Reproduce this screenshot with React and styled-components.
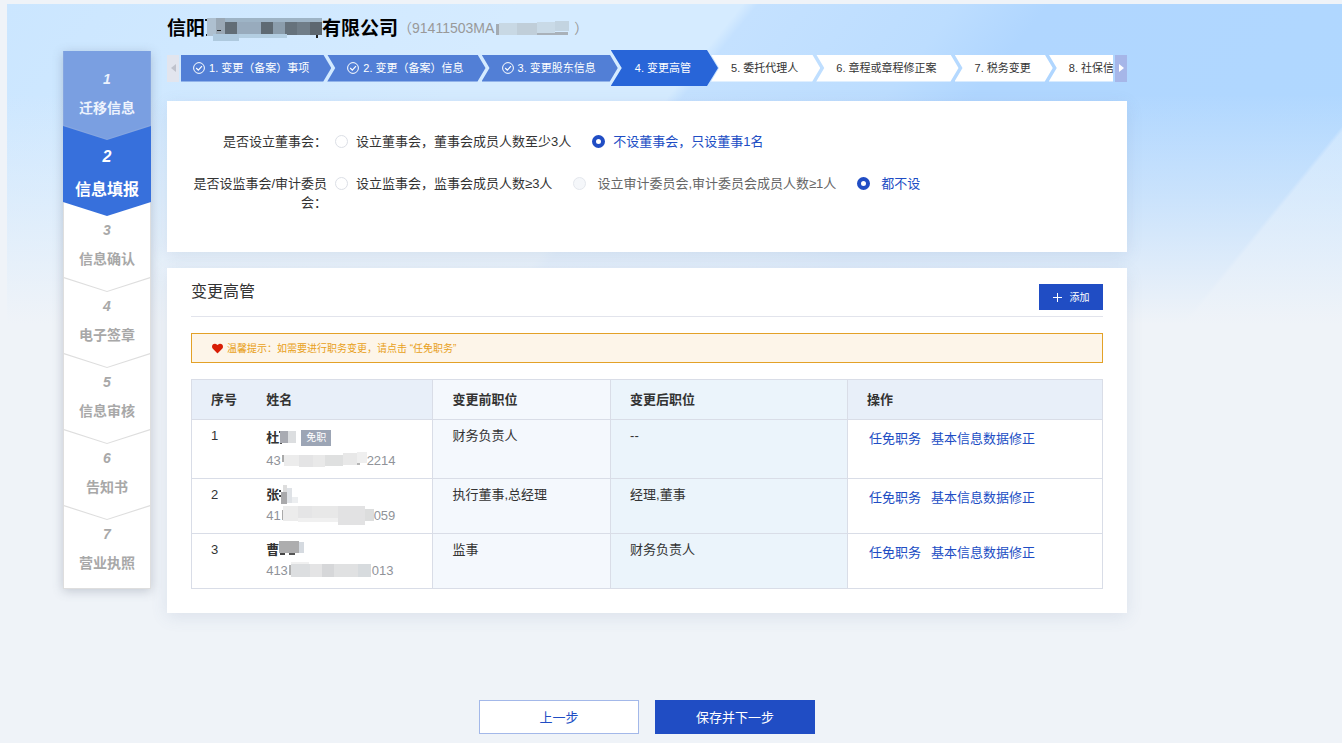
import styled, { createGlobalStyle, css } from 'styled-components';
import { FaHeart } from 'react-icons/fa';

const flowSteps = ['迁移信息', '信息填报', '信息确认', '电子签章', '信息审核', '告知书', '营业执照'];

const formSteps = [
  { name: '变更（备案）事项', state: 'done' },
  { name: '变更（备案）信息', state: 'done' },
  { name: '变更股东信息', state: 'done' },
  { name: '变更高管', state: 'active' },
  { name: '委托代理人', state: 'todo' },
  { name: '章程或章程修正案', state: 'todo' },
  { name: '税务变更', state: 'todo' },
  { name: '社保信息', state: 'todo' },
];

const questions = [
  {
    name: 'board',
    label: '是否设立董事会：',
    options: [
      { text: '设立董事会，董事会成员人数至少3人' },
      { text: '不设董事会，只设董事1名', checked: true },
    ],
  },
  {
    name: 'supervisor',
    label: '是否设监事会/审计委员会：',
    options: [
      { text: '设立监事会，监事会成员人数≥3人' },
      { text: '设立审计委员会,审计委员会成员人数≥1人', disabled: true, wide: true },
      { text: '都不设', checked: true, wide: true },
    ],
  },
];

// mask blocks: [x, y, width, height, colour]
const people = [
  {
    surname: '杜',
    removed: true,
    idStart: '43',
    idEnd: '2214',
    before: '财务负责人',
    after: '--',
    nameMask: { w: 17, blocks: [[0, 3, 3, 2, '#444'], [1, 6, 2, 10, '#555'], [1, 3, 8, 12, '#a9abb2'], [9, 3, 8, 12, '#dcdee0']] },
    idMask: { w: 86, blocks: [[1, 4, 3, 7, '#aaa'], [74, 10, 5, 4, '#b5b5b5'], [3, 4, 15, 11, '#ececec'], [18, 4, 14, 12, '#e4e4e5'], [32, 4, 12, 12, '#e9e9e9'], [44, 4, 18, 11, '#dfe0e0'], [62, 2, 14, 12, '#e8e8e8'], [76, 1, 10, 11, '#efefef']] },
  },
  {
    surname: '张',
    idStart: '41',
    idEnd: '059',
    before: '执行董事,总经理',
    after: '经理,董事',
    nameMask: { w: 19, blocks: [[0, 5, 2, 2, '#333'], [0, 10, 3, 2, '#444'], [4, 0, 4, 8, '#ddd'], [2, 7, 6, 12, '#a9a9ab'], [8, 3, 5, 15, '#dfe2e6'], [13, 12, 6, 6, '#eceef0']] },
    idMask: { w: 93, blocks: [[1, 4, 2, 10, '#aaa'], [2, 0, 15, 15, '#ececec'], [17, 0, 14, 12, '#e5e5e6'], [31, 0, 26, 13, '#e8e8e8'], [57, 0, 27, 19, '#e2e2e3'], [84, 3, 9, 12, '#dcdddd'], [17, 12, 40, 4, '#f0f0f0']] },
  },
  {
    surname: '曹',
    idStart: '413',
    idEnd: '013',
    before: '监事',
    after: '财务负责人',
    nameMask: { w: 26, blocks: [[1, 13, 5, 2, '#444'], [10, 13, 6, 2, '#555'], [0, 1, 20, 12, '#adadae'], [20, 2, 5, 11, '#d5dae0']] },
    idMask: { w: 84, blocks: [[1, 4, 4, 10, '#b0b0b0'], [3, 1, 18, 3, '#f0f0f0'], [3, 3, 19, 13, '#dcdee0'], [22, 3, 12, 13, '#e4e4e5'], [34, 3, 12, 13, '#d6d7d9'], [46, 3, 24, 13, '#e0e1e2'], [70, 3, 13, 13, '#d7dbde']] },
  },
];

const companyMask = [
  [0, 2, 3, 2, '#222'],
  [1, 17, 3, 2, '#222'],
  [2, 1, 9, 18, '#aec0d0'],
  [11, 1, 9, 17, '#9aa8b5'],
  [20, 1, 97, 5, '#9eb4c6'],
  [20, 5, 12, 13, '#626d76'],
  [32, 5, 24, 13, '#98abbd'],
  [56, 5, 12, 13, '#5f6a73'],
  [68, 5, 12, 13, '#8b9dac'],
  [80, 5, 12, 13, '#66727c'],
  [92, 5, 13, 13, '#707d88'],
  [105, 5, 12, 13, '#5d6770'],
  [8, 17, 26, 7, '#aec9de'],
  [34, 17, 48, 4, '#b3cee2'],
  [12, 13, 4, 1, '#222'],
  [111, 18, 2, 3, '#222'],
];

const codeMask = [
  [2, 3, 6, 11, '#a4abb2'],
  [38, 11, 36, 3, '#a9b1b9'],
  [5, 2, 18, 12, '#c8d8e4'],
  [23, 2, 20, 12, '#c0ced9'],
  [43, 1, 18, 11, '#c9dae7'],
  [61, 0, 14, 10, '#c3d4e1'],
];

function Mask({ width, height = 20, blocks }) {
  return (
    <MaskSvg width={width} height={height} viewBox={`0 0 ${width} ${height}`} aria-hidden="true">
      {blocks.map(([x, y, w, h, fill], i) => (
        <rect key={i} x={x} y={y} width={w} height={h} fill={fill} />
      ))}
    </MaskSvg>
  );
}

function CheckCircle() {
  return (
    <svg width="12" height="12" viewBox="0 0 12 12" fill="none" stroke="#fff" aria-hidden="true">
      <circle cx="6" cy="6" r="5.4" />
      <path d="M3.2 6l2.1 2.1 3.7-3.9" strokeWidth="1.2" />
    </svg>
  );
}

function App() {
  return (
    <>
      <GlobalStyle />
      <Page>
        <Sidebar>
          {flowSteps.map((name, i) => (
            <FlowStep
              key={name}
              $state={i === 0 ? 'done' : i === 1 ? 'active' : 'todo'}
              $first={i === 0}
              $last={i === flowSteps.length - 1}
              $level={flowSteps.length - i}
            >
              <FlowBody>
                <em>{i + 1}</em>
                <span>{name}</span>
              </FlowBody>
            </FlowStep>
          ))}
        </Sidebar>

        <Main>
          <Company>
            <h1>
              信阳
              <Mask width={117} height={24} blocks={companyMask} />
              有限公司
            </h1>
            <Code>
              （91411503MA
              <Mask width={80} height={16} blocks={codeMask} />
              ）
            </Code>
          </Company>

          <StepNav>
            <Arrow type="button" aria-label="向前" $left>
              <svg width="5" height="8" viewBox="0 0 5 8"><path d="M5 0v8L0 4z" fill="#bfc2cc" /></svg>
            </Arrow>
            <Steps>
              {formSteps.map((step, i) => (
                <Step key={step.name} $state={step.state} $first={i === 0}>
                  <a href={`#step-${i + 1}`}>
                    {step.state === 'done' && <CheckCircle />}
                    {i + 1}. {step.name}
                  </a>
                </Step>
              ))}
            </Steps>
            <Arrow type="button" aria-label="向后">
              <svg width="5" height="8" viewBox="0 0 5 8"><path d="M0 0v8l5-4z" fill="#fff" /></svg>
            </Arrow>
          </StepNav>

          <FormPanel>
            {questions.map((q) => (
              <Question key={q.name} role="radiogroup" aria-labelledby={q.name}>
                <QuestionLabel id={q.name}>{q.label}</QuestionLabel>
                <Options>
                  {q.options.map((o) => (
                    <Option key={o.text} $wide={o.wide}>
                      <input type="radio" name={q.name} defaultChecked={o.checked} disabled={o.disabled} />
                      <span>{o.text}</span>
                    </Option>
                  ))}
                </Options>
              </Question>
            ))}
          </FormPanel>

          <Panel>
            <PanelHead>
              <h2>变更高管</h2>
              <AddButton type="button">
                <svg width="9" height="9" viewBox="0 0 9 9" stroke="#fff" aria-hidden="true">
                  <path d="M4.5 0v9M0 4.5h9" />
                </svg>
                添加
              </AddButton>
            </PanelHead>
            <Tip>
              <FaHeart size={11} color="#d81e06" />
              温馨提示：如需要进行职务变更，请点击 “任免职务”
            </Tip>
            <Table>
              <colgroup>
                <Col $width={6} />
                <Col $width={20.5} />
                <Col $width={19.5} />
                <Col $width={26} />
                <Col $width={28} />
              </colgroup>
              <thead>
                <tr>
                  <Th $open>序号</Th>
                  <Th>姓名</Th>
                  <Th $tone="before">变更前职位</Th>
                  <Th $tone="after">变更后职位</Th>
                  <Th>操作</Th>
                </tr>
              </thead>
              <tbody>
                {people.map((p, i) => (
                  <tr key={p.surname}>
                    <Td $open>{i + 1}</Td>
                    <Td>
                      <Name>
                        {p.surname}
                        <Mask width={p.nameMask.w} height={19} blocks={p.nameMask.blocks} />
                        {p.removed && <Tag>免职</Tag>}
                      </Name>
                      <IdNumber>
                        {p.idStart}
                        <Mask width={p.idMask.w} height={19} blocks={p.idMask.blocks} />
                        {p.idEnd}
                      </IdNumber>
                    </Td>
                    <Td $tone="before">{p.before}</Td>
                    <Td $tone="after">{p.after}</Td>
                    <Td>
                      <Actions>
                        <a href="#duty">任免职务</a>
                        <a href="#correct">基本信息数据修正</a>
                      </Actions>
                    </Td>
                  </tr>
                ))}
              </tbody>
            </Table>
          </Panel>

          <Footer>
            <FootButton type="button">上一步</FootButton>
            <FootButton type="button" $primary>保存并下一步</FootButton>
          </Footer>
        </Main>
      </Page>
    </>
  );
}

const GlobalStyle = createGlobalStyle`
  * {
    box-sizing: border-box;
  }
  body {
    margin: 0;
    padding: 4px 0 0 7px;
    background: #eff3f8;
    color: #333;
    font-family: "Liberation Sans", "Noto Sans CJK SC", sans-serif;
    font-size: 13px;
    line-height: 19px;
  }
  h1, h2, ol {
    margin: 0;
    padding: 0;
    list-style: none;
  }
  button, input {
    margin: 0;
    font: inherit;
  }
  button {
    cursor: pointer;
  }
  a {
    color: inherit;
    text-decoration: none;
  }
`;

const Page = styled.div`
  display: flex;
  align-items: flex-start;
  gap: 16px;
  padding: 0 215px 9px 56px;
  background:
    linear-gradient(180deg, rgba(239, 243, 248, 0) 90px, rgba(239, 243, 248, 0.4) 190px, #eff3f8 320px),
    linear-gradient(129deg, transparent 1114px, rgba(255, 255, 255, 0.32) 1118px) 0 0 / 100% 330px no-repeat,
    linear-gradient(129deg, #cbe6ff 0, #d5ebff 400px, #d5ebff 572px, #c4e1ff 584px, #bcddff 740px, #b0d6ff 810px, #b0d8ff 100%) 0 0 / 100% 330px no-repeat;
`;

const Sidebar = styled.ol`
  flex: none;
  width: 88px;
  margin-top: 47px;
  background: #fff;
  box-shadow: 0 2px 10px rgba(90, 100, 120, 0.3);
`;

const flowColors = {
  done: { bg: '#7a9fe1', line: '#86a6e0', text: '#edf3fd' },
  active: { bg: '#3770dc', line: '#3770dc', text: '#fff' },
  todo: { bg: '#fff', line: '#dedede', text: '#a8a8a8' },
};

const arrowDown = css`
  clip-path: polygon(0 0, 100% 0, 100% calc(100% - 14px), 50% 100%, 0 calc(100% - 14px));
`;

const FlowBody = styled.div`
  display: flex;
  flex-direction: column;
  align-items: center;
  gap: 10px;
  padding-top: 19px;
  font-weight: bold;
`;

const FlowStep = styled.li`
  position: relative;
  z-index: ${(p) => p.$level};
  height: ${(p) => (p.$last ? 83 : p.$first ? 89 : 90)}px;
  margin-bottom: ${(p) => (p.$last ? 0 : -14)}px;
  padding: 0 1px 1px;
  background: ${(p) => flowColors[p.$state].line};
  color: ${(p) => flowColors[p.$state].text};
  font-size: ${(p) => (p.$state === 'active' ? 16 : 14)}px;
  ${(p) => !p.$last && arrowDown}

  ${FlowBody} {
    height: 100%;
    background: ${(p) => flowColors[p.$state].bg};
    ${(p) => !p.$last && arrowDown}
    ${(p) => p.$state === 'active' && 'gap: 14px; padding-top: 21px;'}
  }
`;

const Main = styled.main`
  flex: 1;
  min-width: 0;
`;

const Company = styled.header`
  display: flex;
  align-items: center;
  height: 46px;
  padding-top: 3px;

  h1 {
    display: flex;
    align-items: center;
    color: #000;
    font-size: 19px;
    line-height: 28px;
    white-space: nowrap;
  }
`;

const Code = styled.span`
  display: flex;
  align-items: center;
  color: #999;
  font-size: 14px;
  white-space: nowrap;
`;

const MaskSvg = styled.svg`
  flex: none;
  display: block;
`;

const StepNav = styled.nav`
  display: flex;
  align-items: center;
  height: 36px;
`;

const Arrow = styled.button`
  flex: none;
  display: flex;
  align-items: center;
  justify-content: center;
  width: 12px;
  height: 27px;
  padding: 0;
  border: 0;
  background: ${(p) => (p.$left ? '#e2e5ee' : '#a6b6e8')};
`;

const Steps = styled.ol`
  flex: 1;
  min-width: 0;
  display: flex;
  align-items: center;
  margin: 0 2px;
  overflow: hidden;
`;

const stepColors = {
  done: ['#527fd6', '#fff'],
  active: ['#2865d8', '#fff'],
  todo: ['#fff', '#333'],
};

const Step = styled.li`
  flex: none;
  margin-right: -4px;
  ${(p) => p.$state === 'active' && 'z-index: 1; margin: 0 -7px 0 -3px;'}

  a {
    display: flex;
    align-items: center;
    gap: 4px;
    height: 27px;
    padding: 0 22px 0 20px;
    background: ${(p) => stepColors[p.$state][0]};
    color: ${(p) => stepColors[p.$state][1]};
    font-size: 11px;
    white-space: nowrap;
    clip-path: polygon(0 0, calc(100% - 8px) 0, 100% 50%, calc(100% - 8px) 100%, 0 100%, 8px 50%);
    ${(p) => p.$first && css`
      padding-left: 12px;
      clip-path: polygon(0 0, calc(100% - 8px) 0, 100% 50%, calc(100% - 8px) 100%, 0 100%);
    `}
    ${(p) => p.$state === 'active' && css`
      height: 36px;
      padding: 0 27px 0 24px;
      clip-path: polygon(0 0, calc(100% - 11px) 0, 100% 50%, calc(100% - 11px) 100%, 0 100%, 11px 50%);
    `}
  }
`;

const Panel = styled.section`
  margin-top: 16px;
  padding: 16px 24px 24px;
  background: #fff;
  box-shadow: 0 4px 16px rgba(80, 110, 150, 0.12);
`;

const FormPanel = styled(Panel)`
  display: flex;
  flex-direction: column;
  gap: 23px;
  margin-top: 15px;
  padding: 31px 24px 40px;
`;

const Question = styled.div`
  display: flex;
  gap: 8px;
`;

const QuestionLabel = styled.div`
  width: 136px;
  text-align: right;
`;

const Options = styled.div`
  display: flex;
  flex-wrap: wrap;
  gap: 21px;
`;

const Option = styled.label`
  display: flex;
  align-items: center;
  gap: ${(p) => (p.$wide ? 11 : 8)}px;
  height: 19px;

  input {
    appearance: none;
    width: 13px;
    height: 13px;
    border: 1px solid #dcdfe6;
    border-radius: 50%;
    background: #fff;
  }
  input:checked {
    border: 4px solid #204dc4;
  }
  input:checked + span {
    color: #204dc4;
  }
  input:disabled {
    background: #f5f7fa;
    border-color: #e4e7ed;
  }
  input:disabled + span {
    color: #666;
  }
`;

const PanelHead = styled.div`
  display: flex;
  justify-content: space-between;
  align-items: flex-start;
  padding-bottom: 6px;
  border-bottom: 1px solid #e2e4ec;

  h2 {
    font-size: 16px;
    font-weight: normal;
    line-height: 16px;
  }
`;

const AddButton = styled.button`
  display: flex;
  align-items: center;
  justify-content: center;
  gap: 8px;
  width: 64px;
  height: 26px;
  padding: 0;
  border: 0;
  background: #204dc4;
  color: #fff;
  font-size: 10px;
`;

const Tip = styled.div`
  display: flex;
  align-items: center;
  gap: 4px;
  height: 30px;
  margin: 16px 0;
  padding: 0 20px;
  border: 1px solid #e3a127;
  background: #fdf5e9;
  color: #e8a020;
  font-size: 10px;
`;

const Table = styled.table`
  width: 100%;
  table-layout: fixed;
  border-collapse: collapse;
  border: 1px solid #d9dde7;
`;

const Col = styled.col`
  width: ${(p) => p.$width}%;
`;

const tones = { before: '#f4f8fd', after: '#ebf4fb' };

const cell = css`
  padding: 0 0 0 19px;
  border: 1px solid #d9dde7;
  ${(p) => p.$open && 'border-right: 0;'}

  &:nth-child(2) {
    padding-left: 20px;
    border-left: 0;
  }
`;

const Th = styled.th`
  ${cell}
  height: 40px;
  background: ${(p) => tones[p.$tone] || '#e8eff9'};
  text-align: left;
`;

const Td = styled.td`
  ${cell}
  padding-top: 5px;
  padding-bottom: 7px;
  background: ${(p) => tones[p.$tone] || '#fff'};
  line-height: 21px;
  vertical-align: top;
`;

const Name = styled.div`
  display: flex;
  align-items: center;
  min-height: 21px;
  font-weight: bold;
`;

const Tag = styled.span`
  width: 30px;
  margin: 5px 0 4px 5px;
  background: #9ca5b5;
  color: #fff;
  font-size: 10px;
  font-weight: normal;
  line-height: 16px;
  text-align: center;
`;

const IdNumber = styled.div`
  display: flex;
  align-items: center;
  color: #909399;
`;

const Actions = styled.div`
  display: flex;
  gap: 10px;
  padding: 3px 2px 0;
  color: #204dc4;
`;

const Footer = styled.footer`
  display: flex;
  justify-content: center;
  gap: 16px;
  margin-top: 87px;
`;

const FootButton = styled.button`
  width: 160px;
  height: 34px;
  padding: 0;
  border: 1px solid ${(p) => (p.$primary ? '#204dc4' : '#a3b8e9')};
  background: ${(p) => (p.$primary ? '#204dc4' : '#fff')};
  color: ${(p) => (p.$primary ? '#fff' : '#204dc4')};
`;

export default App;
